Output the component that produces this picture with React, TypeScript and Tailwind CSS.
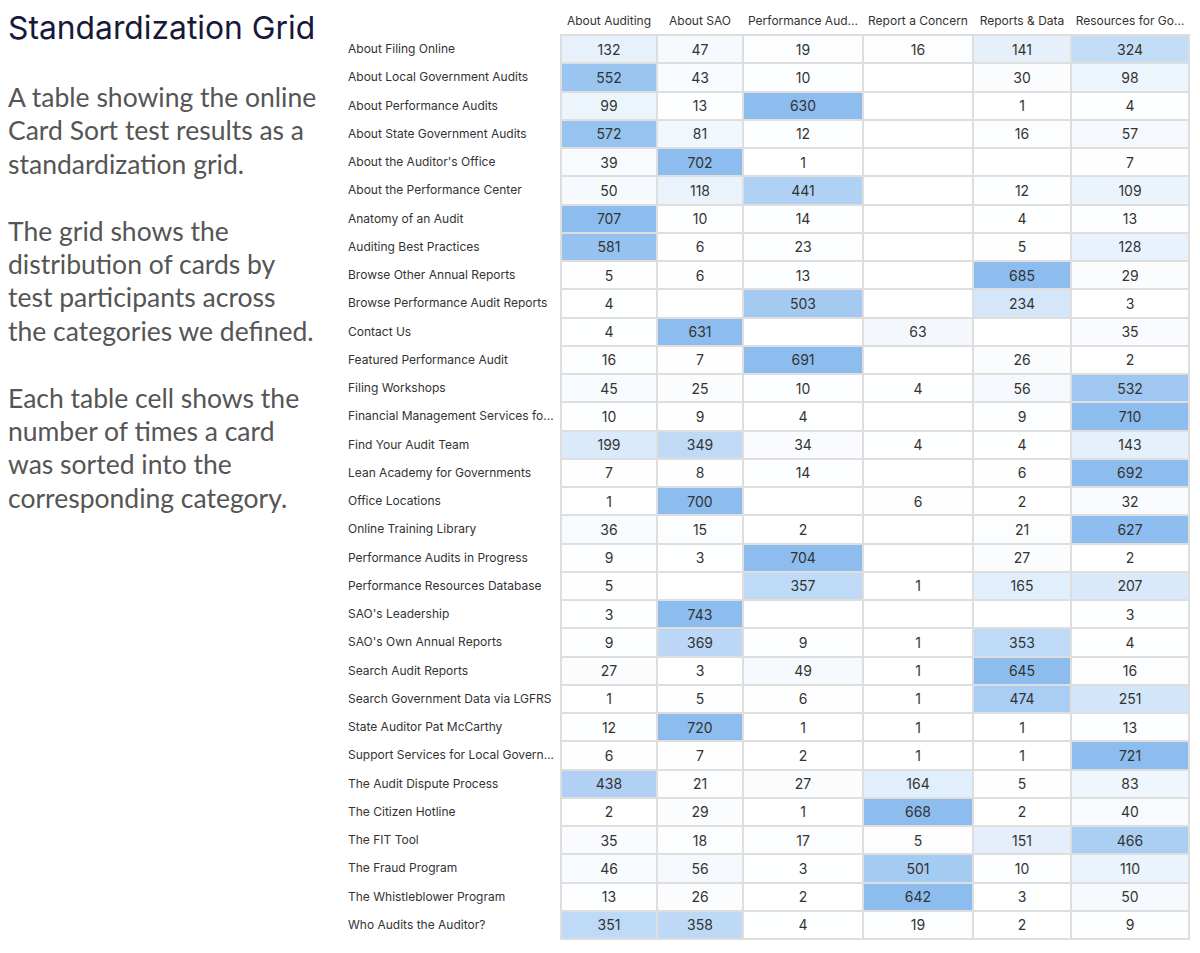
import React from "react";

const headers = [
  "About Auditing",
  "About SAO",
  "Performance Aud...",
  "Report a Concern",
  "Reports & Data",
  "Resources for Go...",
];

type Row = [string, (number | null)[]];

const rows: Row[] = [
  ["About Filing Online", [132, 47, 19, 16, 141, 324]],
  ["About Local Government Audits", [552, 43, 10, null, 30, 98]],
  ["About Performance Audits", [99, 13, 630, null, 1, 4]],
  ["About State Government Audits", [572, 81, 12, null, 16, 57]],
  ["About the Auditor's Office", [39, 702, 1, null, null, 7]],
  ["About the Performance Center", [50, 118, 441, null, 12, 109]],
  ["Anatomy of an Audit", [707, 10, 14, null, 4, 13]],
  ["Auditing Best Practices", [581, 6, 23, null, 5, 128]],
  ["Browse Other Annual Reports", [5, 6, 13, null, 685, 29]],
  ["Browse Performance Audit Reports", [4, null, 503, null, 234, 3]],
  ["Contact Us", [4, 631, null, 63, null, 35]],
  ["Featured Performance Audit", [16, 7, 691, null, 26, 2]],
  ["Filing Workshops", [45, 25, 10, 4, 56, 532]],
  ["Financial Management Services fo...", [10, 9, 4, null, 9, 710]],
  ["Find Your Audit Team", [199, 349, 34, 4, 4, 143]],
  ["Lean Academy for Governments", [7, 8, 14, null, 6, 692]],
  ["Office Locations", [1, 700, null, 6, 2, 32]],
  ["Online Training Library", [36, 15, 2, null, 21, 627]],
  ["Performance Audits in Progress", [9, 3, 704, null, 27, 2]],
  ["Performance Resources Database", [5, null, 357, 1, 165, 207]],
  ["SAO's Leadership", [3, 743, null, null, null, 3]],
  ["SAO's Own Annual Reports", [9, 369, 9, 1, 353, 4]],
  ["Search Audit Reports", [27, 3, 49, 1, 645, 16]],
  ["Search Government Data via LGFRS", [1, 5, 6, 1, 474, 251]],
  ["State Auditor Pat McCarthy", [12, 720, 1, 1, 1, 13]],
  ["Support Services for Local Govern...", [6, 7, 2, 1, 1, 721]],
  ["The Audit Dispute Process", [438, 21, 27, 164, 5, 83]],
  ["The Citizen Hotline", [2, 29, 1, 668, 2, 40]],
  ["The FIT Tool", [35, 18, 17, 5, 151, 466]],
  ["The Fraud Program", [46, 56, 3, 501, 10, 110]],
  ["The Whistleblower Program", [13, 26, 2, 642, 3, 50]],
  ["Who Audits the Auditor?", [351, 358, 4, 19, 2, 9]],
];

function cellBg(v: number | null): string {
  if (!v) return "#ffffff";
  const t = Math.min(1, v / 630);
  const strong = [141, 189, 239];
  const c = strong.map((s) => Math.round(255 + (s - 255) * t));
  return `rgb(${c[0]}, ${c[1]}, ${c[2]})`;
}

const para1 = ["A table showing the online", "Card Sort test results as a", "standardization grid."];
const para2 = ["The grid shows the", "distribution of cards by", "test participants across", "the categories we defined."];
const para3 = ["Each table cell shows the", "number of times a card", "was sorted into the", "corresponding category."];

const cols = "grid grid-cols-[94px_84px_118px_108px_96px_116px] gap-x-[2px]";

export default function App() {
  return (
    <div className="w-[1200px] h-[953px] bg-white flex overflow-hidden">
      <div className="w-[348px] shrink-0 pl-[8px]">
        <div
          className="mt-[8px] text-[31.8px] leading-[40px] text-[#17183a]"
          style={{ fontFamily: "Inter, 'Noto Sans', sans-serif" }}
        >
          Standardization Grid
        </div>
        <div
          className="mt-[33px] text-[26.5px] leading-[33.4px] text-[#555555]"
          style={{ fontFamily: "Lato, 'Open Sans', sans-serif" }}
        >
          {para1.map((l) => (
            <div key={l} className="whitespace-nowrap">{l}</div>
          ))}
          <div className="h-[33.4px]" />
          {para2.map((l) => (
            <div key={l} className="whitespace-nowrap">{l}</div>
          ))}
          <div className="h-[33.4px]" />
          {para3.map((l) => (
            <div key={l} className="whitespace-nowrap">{l}</div>
          ))}
        </div>
      </div>

      <div
        className="flex flex-col text-[#333333]"
        style={{ fontFamily: "Inter, 'Liberation Sans', sans-serif" }}
      >
        <div className="flex h-[34px]">
          <div className="w-[212px] shrink-0" />
          <div className={`${cols} px-[2px]`}>
            {headers.map((h) => (
              <div
                key={h}
                className="h-[34px] flex items-end justify-center pb-[5px] text-[12px] leading-[16px] whitespace-nowrap overflow-hidden"
              >
                {h}
              </div>
            ))}
          </div>
        </div>
        <div className="flex">
          <div className="w-[212px] shrink-0 flex flex-col gap-y-[2px] py-[2px]">
            {rows.map(([name]) => (
              <div
                key={name}
                className="h-[26.25px] flex items-center text-[12px] whitespace-nowrap"
              >
                {name}
              </div>
            ))}
          </div>
          <div className={`${cols} gap-y-[2px] p-[2px] bg-[#dedede] auto-rows-[26.25px]`}>
            {rows.map(([name, vals]) =>
              vals.map((v, i) => (
                <div
                  key={name + i}
                  className="flex items-center justify-center text-[14px]"
                  style={{ backgroundColor: cellBg(v) }}
                >
                  {v ?? ""}
                </div>
              ))
            )}
          </div>
        </div>
      </div>
    </div>
  );
}
